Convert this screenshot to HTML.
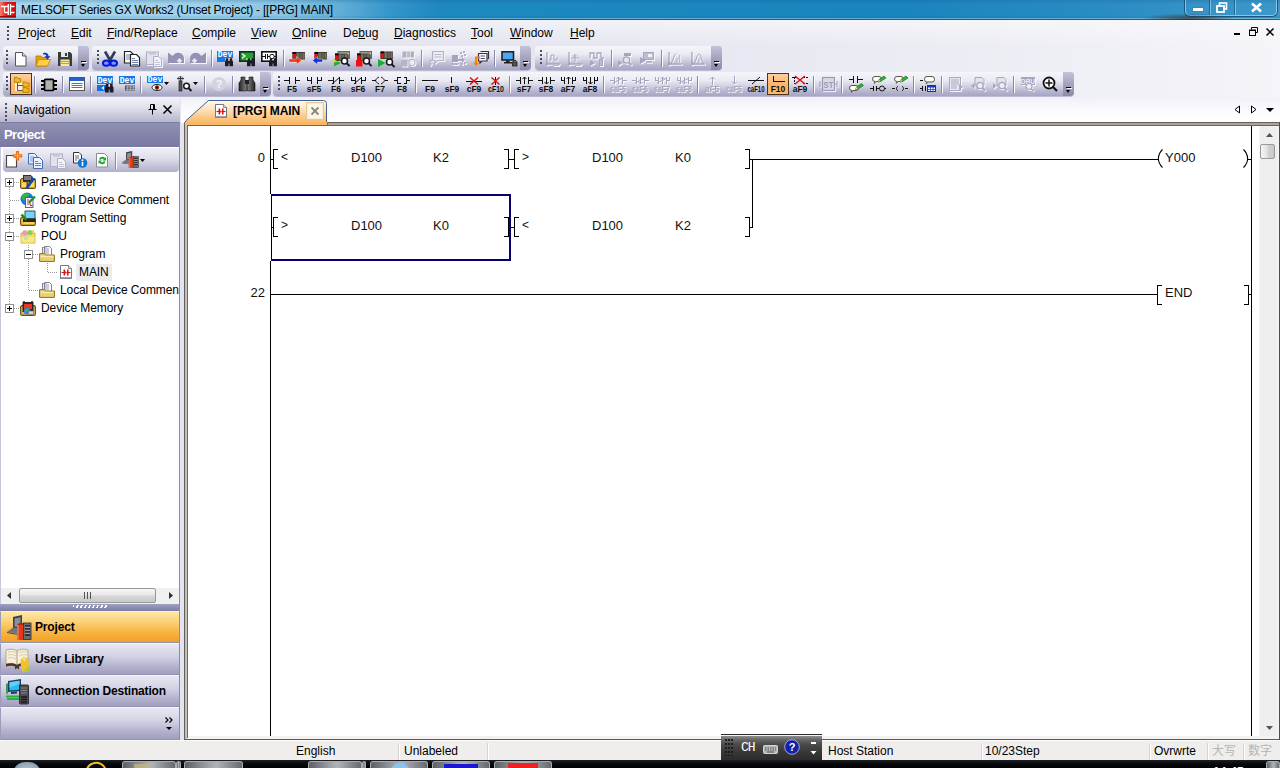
<!DOCTYPE html>
<html>
<head>
<meta charset="utf-8">
<title>MELSOFT Series GX Works2</title>
<style>
*{box-sizing:border-box;margin:0;padding:0}
html,body{width:1280px;height:768px;overflow:hidden}
body{position:relative;background:linear-gradient(90deg,#e2e2ee 0,#e5e5f0 40%,#ececf4 75%,#f4f4f9 100%);font-family:"Liberation Sans","Noto Sans CJK SC",sans-serif;font-size:12px;color:#000}
.a{position:absolute}
svg{position:absolute;overflow:visible}
#title{left:0;top:0;width:1280px;height:20px;background:linear-gradient(180deg,rgba(20,90,140,.25) 0,rgba(255,255,255,0) 4px,rgba(255,255,255,0) 15px,rgba(10,70,120,.25) 20px),linear-gradient(90deg,#a8d6ec 0px,#a0d1e9 200px,#8ac5e3 285px,#62aed7 340px,#3496cb 390px,#1e88c1 440px,#1a84be 900px,#2a8cc4 1100px,#3c98ca 1280px)}
#title .t{left:21px;top:3px;font-size:12px;line-height:15px;white-space:nowrap;color:#000;letter-spacing:-0.24px}
#titleline{left:0;top:18px;width:1280px;height:2px;background:linear-gradient(180deg,rgba(150,215,245,.55) 0,rgba(150,215,245,.55) 1px,#245c80 1px,#245c80 2px)}
#menu{left:0;top:20px;width:1280px;height:26px;background:linear-gradient(180deg,rgba(255,255,255,.45),rgba(255,255,255,0))}
#menu span{position:absolute;top:6px;line-height:15px;font-size:12px;white-space:nowrap}
#menu u{text-decoration:underline;text-underline-offset:1px}
.grip{position:absolute;width:2px;height:14px;background:repeating-linear-gradient(180deg,#4c4c5c 0,#4c4c5c 2px,transparent 2px,transparent 4px)}
.tb{position:absolute;height:24px;box-shadow:0 1px 0 rgba(150,150,185,.55);border-radius:3px 3px 4px 4px;background:linear-gradient(180deg,#f5f5fb 0%,#eaeaf3 35%,#cdcddf 62%,#b4b4ce 82%,#a6a6c4 100%)}
.tbopt{position:absolute;top:0;right:0;width:11px;height:24px;border-radius:0 3px 4px 0;background:linear-gradient(180deg,#c2c2d8 0%,#a4a4c0 50%,#8a8aac 100%)}
.tbopt:before{content:"";position:absolute;left:3px;top:15px;width:5px;height:1px;background:#000;box-shadow:1px 1px 0 #fff}
.tbopt:after{content:"";position:absolute;left:3px;top:18px;border:3px solid transparent;border-top:3px solid #000;border-bottom:none;width:0;height:0;border-left-width:2.5px;border-right-width:2.5px}
.sep{position:absolute;width:2px;height:17px;top:4px;border-left:1px solid #8888a8;border-right:1px solid #fafaff}
.emb{filter:drop-shadow(1px 1px 0 rgba(255,255,255,.85))}
.ic{position:absolute;width:16px;height:16px;top:4px}
.sel{position:absolute;top:1px;width:22px;height:22px;border:1px solid #4a3420;background:linear-gradient(180deg,#fcd0a0,#fbb468 55%,#fbb870)}

#navhdr{left:0;top:97px;width:180px;height:25px;background:linear-gradient(180deg,#f2f2f9 0%,#e2e2ee 40%,#c4c4d8 80%,#b6b6ce 100%)}
#navhdr .t{left:14px;top:6px;font-size:12px;line-height:15px}
#projhdr{left:0px;top:122px;width:180px;height:25px;background:linear-gradient(180deg,#9090b2 0%,#8484aa 50%,#7878a2 100%);border-top:1px solid #7c7ca4}
#projhdr .t{left:4px;top:4px;color:#fff;font-weight:bold;font-size:13px;line-height:16px;letter-spacing:-0.55px}
#navbody{left:0;top:147px;width:180px;height:457px;background:#fff;border-left:1px solid #c8c8d8}
#navtb{left:3px;top:148px;width:176px;height:24px;border-radius:0 0 4px 4px;background:linear-gradient(180deg,#f0f0f8 0%,#e0e0ec 40%,#c4c4d8 75%,#b0b0ca 100%)}
.trow{position:absolute;left:0;height:18px;line-height:18px;font-size:12px;white-space:nowrap;letter-spacing:-0.1px}
.trow span{position:absolute;top:0}
.pm{position:absolute;width:9px;height:9px;border:1px solid #919191;background:#fff}
.pm:before{content:"";position:absolute;left:1px;top:3px;width:5px;height:1px;background:#000}
.pm.plus:after{content:"";position:absolute;left:3px;top:1px;width:1px;height:5px;background:#000}
.dotv{position:absolute;width:1px;background:repeating-linear-gradient(180deg,#999 0,#999 1px,transparent 1px,transparent 2px)}
.doth{position:absolute;height:1px;background:repeating-linear-gradient(90deg,#999 0,#999 1px,transparent 1px,transparent 2px)}
#hscroll{left:1px;top:588px;width:179px;height:16px;background:#f0f0f0}
#hthumb{left:18px;top:0px;width:137px;height:15px;border:1px solid #989898;border-radius:2px;background:linear-gradient(180deg,#f6f6f6 0%,#e8e8e8 45%,#d6d6d6 55%,#cacaca 100%)}
#navsplit{left:0;top:604px;width:180px;height:7px;background:linear-gradient(180deg,#a0a0c0,#7c7ca4)}
.nbtn{position:absolute;left:0;width:180px;height:32px;border-top:1px solid #f4f4fa;border-left:1px solid #9c9cba;background:linear-gradient(180deg,#e8e8f3 0%,#d2d2e4 40%,#b0b0cc 75%,#9e9ebe 100%);box-shadow:inset 0 -1px 0 #9292b2}
.nbtn .t{position:absolute;left:34px;top:7px;font-weight:bold;font-size:12px;line-height:16px;white-space:nowrap;letter-spacing:-0.17px}
.nbtn.on{background:linear-gradient(180deg,#fde8a8 0%,#fbd27a 30%,#f7b442 65%,#f0a022 100%);border-top:1px solid #fff0c8}

#tabstrip{left:181px;top:97px;width:1099px;height:26px;background:linear-gradient(180deg,#f0f0f8 0%,#fbfbfe 50%,#ffffff 100%)}
#split{left:180px;top:97px;width:4px;height:643px;background:#e4e4f1}
#frame{left:184px;top:122px;width:1096px;height:618px;background:#fff}
#doc{left:188px;top:126px;width:1072px;height:611px;background:#fff;overflow:hidden}
.lt{position:absolute;font-family:"Liberation Sans",sans-serif;font-size:13px;line-height:15px;white-space:nowrap;color:#111}
#vscroll{left:1259px;top:126px;width:18px;height:610px;background:#efefef;border-left:1px solid #f6f6f6}
#vthumb{left:0px;top:18px;width:15px;height:15px;border:1px solid #9a9a9a;border-radius:2px;background:linear-gradient(90deg,#f4f4f4 0%,#e4e4e4 45%,#d2d2d2 55%,#c8c8c8 100%)}
#status{left:0;top:740px;width:1280px;height:21px;background:#f0eeec;border-top:1px solid #fafafa}
#status .s{position:absolute;top:3px;font-size:12px;line-height:15px;white-space:nowrap}
#status .d{position:absolute;top:2px;width:1px;height:17px;background:#d4d4d4;box-shadow:1px 0 0 #fff}
#taskbar{left:0;top:760px;width:1280px;height:8px;overflow:hidden;background:linear-gradient(180deg,#1c2024 0,#0a0c10 3px,#000 8px)}
.tkb{position:absolute;top:1px;height:8px;border:1px solid #a8acb0;border-bottom:none;border-radius:3px 3px 0 0;background:linear-gradient(90deg,#5c6066 0,#a4a8ac 45%,#b0b4b8 55%,#666a70 100%)}
</style>
</head>
<body>
<div id="title" class="a"><svg class="a" style="left:0;top:0" width="17" height="19" viewBox="0 0 17 19"><defs><linearGradient id="ti" x1="0" x2="1" y1="0" y2="0"><stop offset="0" stop-color="#f88070"/><stop offset=".35" stop-color="#e82018"/><stop offset="1" stop-color="#d80808"/></linearGradient></defs><rect x="0" y="2" width="16" height="15.5" fill="url(#ti)"/><rect x="0" y="16" width="16" height="1.5" fill="#a00808"/><g stroke="#fff" stroke-width="1.300" fill="none"><path d="M1 6.500h7M10.5 6.500h4M8.300 4v11M10.5 4v11M4.5 6.500v6M4.5 12.500h3.500M10.5 12.500h4"/></g></svg><div class="t a">MELSOFT Series GX Works2 (Unset Project) - [[PRG] MAIN]</div><div class="a" style="left:1185px;top:-4px;width:92px;height:20px;border:1px solid rgba(255,255,255,.45);border-radius:0 0 5px 5px;box-shadow:0 0 0 1px rgba(0,30,60,.5)"></div><div class="a" style="left:1210px;top:0;width:1px;height:15px;background:rgba(255,255,255,.4);box-shadow:-1px 0 0 rgba(0,30,60,.4)"></div><div class="a" style="left:1235px;top:0;width:1px;height:15px;background:rgba(255,255,255,.4);box-shadow:-1px 0 0 rgba(0,30,60,.4)"></div><div class="a" style="left:1193px;top:8px;width:10px;height:3px;background:#fff;box-shadow:0 0 1px #234"></div><svg class="a" style="left:1216px;top:2px" width="12" height="11" viewBox="0 0 12 11"><rect x="3.5" y="1" width="7" height="6" fill="none" stroke="#fff" stroke-width="1.600"/><rect x="1" y="4" width="7" height="6" fill="#3a8ec0" stroke="#fff" stroke-width="1.800"/></svg><svg class="a" style="left:1250px;top:2px" width="13" height="11" viewBox="0 0 13 11"><path d="M2 1.500l9 8M11 1.500l-9 8" stroke="#fff" stroke-width="2.600"/></svg></div>
<div id="titleline" class="a"></div>
<div class="a" style="left:1080px;top:14px;width:200px;height:6px;background:radial-gradient(ellipse 48px 7px at 108px 6px,rgba(50,40,30,.75),rgba(50,40,30,0))"></div><div id="menu" class="a"><div class="grip" style="left:7px;top:6px;height:14px"></div><span style="left:18px"><u>P</u>roject</span><span style="left:71px"><u>E</u>dit</span><span style="left:107px"><u>F</u>ind/Replace</span><span style="left:192px"><u>C</u>ompile</span><span style="left:251px"><u>V</u>iew</span><span style="left:292px"><u>O</u>nline</span><span style="left:343px">De<u>b</u>ug</span><span style="left:394px"><u>D</u>iagnostics</span><span style="left:471px"><u>T</u>ool</span><span style="left:510px"><u>W</u>indow</span><span style="left:570px"><u>H</u>elp</span><div class="a" style="left:1234px;top:13px;width:6px;height:2px;background:#000"></div><svg class="a" style="left:1249px;top:7px" width="9" height="9" viewBox="0 0 9 9"><path d="M2.5 2.500v-2h6v5h-2" fill="none" stroke="#000"/><rect x=".5" y="3" width="6" height="5.5" fill="none" stroke="#000"/><path d="M0 3.500h7" stroke="#000"/></svg><svg class="a" style="left:1266px;top:8px" width="8" height="8" viewBox="0 0 8 8"><path d="M.5 .5l7 7M7.5 .5l-7 7" stroke="#000" stroke-width="1.5"/></svg></div>
<div class="tb" style="left:3px;top:46px;width:86px"><div class="grip" style="left:3px;top:4px"></div><svg class="a" style="left:10px;top:5px" width="16" height="16" viewBox="0 0 16 16" ><path d="M2.5 1.5h7l3.5 3.5v10h-10.5z" fill="#fff" stroke="#555" /><path d="M9.5 1.5v3.5h3.5" fill="#e8e8e8" stroke="#555"/></svg><svg class="a" style="left:32px;top:5px" width="16" height="16" viewBox="0 0 16 16" ><path d="M1 5h5l1 1.5h5v8.5h-11z" fill="#e8a010" stroke="#b87400" stroke-width=".8"/><path d="M1 15l2.5-6.5h12l-3 6.5z" fill="#ffd040" stroke="#c08000" stroke-width=".8"/><path d="M8 2.2c3-1.2 5.5 0 5.6 3h1.9l-3 3.3-3-3.3h1.9c0-1.4-1.4-2-3.4-1.6z" fill="#1038c8"/></svg><svg class="a" style="left:54px;top:5px" width="16" height="16" viewBox="0 0 16 16" ><path d="M1 1h12l2 2v12h-14z" fill="#3a3a3a"/><rect x="4" y="1" width="7" height="5" fill="#e8e8e8"/><rect x="8" y="2" width="2" height="3" fill="#3a3a3a"/><rect x="3.5" y="8.5" width="9" height="6.5" fill="#f8e8a0"/><path d="M3.5 10.5h9M3.5 12.5h9" stroke="#c0a040" /></svg><div class="tbopt"></div></div>
<div class="tb" style="left:92px;top:46px;width:439px"><div class="grip" style="left:5px;top:4px"></div><svg class="a" style="left:10px;top:5px" width="16" height="16" viewBox="0 0 16 16" ><path d="M3 0.500l5.5 9.500M13 0.500l-5.5 9.5" stroke="#2c3c54" stroke-width="2.600" fill="none"/><ellipse cx="4.300" cy="12.200" rx="3.300" ry="2.600" fill="#8098ff" stroke="#0414e4" stroke-width="2"/><ellipse cx="11.700" cy="12.200" rx="3.300" ry="2.600" fill="#8098ff" stroke="#0414e4" stroke-width="2"/></svg><svg class="a" style="left:32px;top:5px" width="16" height="16" viewBox="0 0 16 16" ><path d="M0.5 0.500h6l2.5 2.500v9h-8.500z" fill="#fff" stroke="#222" stroke-width="1.200"/><path d="M2 4h4M2 6h4M2 8h4" stroke="#7080a8"/><path d="M6.5 3.500h6l3 3v8.500h-9z" fill="#fff" stroke="#222" stroke-width="1.200"/><path d="M8 7.500h3M8 9.500h6M8 11.500h6M8 13.500h6" stroke="#7080a8"/></svg><svg class="a emb" style="left:54px;top:5px" width="16" height="16" viewBox="0 0 16 16"><rect x="0.5" y="1" width="12" height="12.5" fill="#e2e2ee" stroke="#aeaec2"/><rect x="3" y="1.5" width="7" height="2" fill="#c4c4d4"/><path d="M7.5 5.500h5l3 3v7h-8z" fill="#f2f2f8" stroke="#aeaec2"/><path d="M9 9.500h3M9 11.500h5M9 13.500h5" stroke="#c4c4d4"/></svg><svg class="a emb" style="left:76px;top:5px" width="16" height="16" viewBox="0 0 16 16"><path d="M0 1.500l4.5 3.5 3-2.800a6 6 0 0 1 8.5 5.500v4.300h-16z" fill="#9292b2"/><path d="M11.5 7l2.800 2.800-2.800 2.800-2.800-2.800z" fill="#e4e4f0"/></svg><svg class="a emb" style="left:98px;top:5px" width="16" height="16" viewBox="0 0 16 16"><g transform="translate(16,0) scale(-1,1)"><path d="M0 1.500l4.5 3.5 3-2.800a6 6 0 0 1 8.5 5.500v4.300h-16z" fill="#9292b2"/><path d="M11.5 7l2.800 2.800-2.800 2.800-2.800-2.800z" fill="#e4e4f0"/></g></svg><div class="sep" style="left:119px"></div><svg class="a" style="left:125px;top:5px" width="16" height="16" viewBox="0 0 16 16" ><rect x="0" y="0" width="16" height="7" fill="#1478e8"/><text x="8" y="6.4" font-family="Liberation Mono,monospace" font-weight="bold" font-size="8.5" fill="#fff" text-anchor="middle" textLength="14.5" lengthAdjust="spacingAndGlyphs">Dev</text><rect x="0" y="7" width="8" height="4" fill="#1478e8"/><g transform="translate(8,7.3) scale(0.8)"><path d="M0 10v-6l1-1.500v-2.500h3v2.500l.5 1.500v6zM10 10v-6l-1-1.500v-2.500h-3v2.500l-.5 1.500v6z" fill="#1c1c24"/><rect x="3.5" y="3.5" width="3" height="3" fill="#1c1c24"/></g></svg><svg class="a" style="left:147px;top:5px" width="16" height="16" viewBox="0 0 16 16" ><rect x=".8" y=".8" width="14.400" height="9.400" fill="#18a828" stroke="#223" stroke-width="1.600"/><path d="M3 2.800l3 2.200-3 2.200M7 8h5" stroke="#fff" fill="none" stroke-width="1.200"/><g transform="translate(8,7.3) scale(0.8)"><path d="M0 10v-6l1-1.500v-2.500h3v2.500l.5 1.500v6zM10 10v-6l-1-1.500v-2.500h-3v2.500l-.5 1.500v6z" fill="#1c1c24"/><rect x="3.5" y="3.5" width="3" height="3" fill="#1c1c24"/></g></svg><svg class="a" style="left:169px;top:5px" width="16" height="16" viewBox="0 0 16 16" ><rect x=".8" y=".8" width="14.400" height="9.400" fill="#fff" stroke="#111" stroke-width="1.600"/><path d="M1 5.500h3M4.5 3v5M6.5 3v5M6.5 5.500h2.500M13 5.500h2" stroke="#111"/><circle cx="11" cy="5.5" r="2.200" fill="none" stroke="#111"/><g transform="translate(8,7.3) scale(0.8)"><path d="M0 10v-6l1-1.500v-2.500h3v2.500l.5 1.500v6zM10 10v-6l-1-1.500v-2.500h-3v2.500l-.5 1.500v6z" fill="#1c1c24"/><rect x="3.5" y="3.5" width="3" height="3" fill="#1c1c24"/></g></svg><div class="sep" style="left:191px"></div><svg class="a" style="left:197px;top:5px" width="16" height="16" viewBox="0 0 16 16" ><rect x="3.5" y="1" width="12.5" height="7.5" fill="#3a3630"/><rect x="3.5" y="1" width="3.5" height="2" fill="#000"/><rect x="3.5" y="3" width="3.5" height="4.5" fill="#e41010"/><rect x="7.5" y="1.8" width="2.5" height="6" fill="#74705e"/><rect x="10.5" y="1.8" width="2.5" height="6" fill="#646052"/><rect x="13.5" y="1.8" width="2.200" height="6" fill="#74705e"/><path d="M0 8h7.500v-2.500l5 4-5 4v-2.500h-7.500z" fill="#ec3410" stroke="#fff" stroke-width=".4"/></svg><svg class="a" style="left:219px;top:5px" width="16" height="16" viewBox="0 0 16 16" ><rect x="3.5" y="1" width="12.5" height="7.5" fill="#3a3630"/><rect x="3.5" y="1" width="3.5" height="2" fill="#000"/><rect x="3.5" y="3" width="3.5" height="4.5" fill="#e41010"/><rect x="7.5" y="1.8" width="2.5" height="6" fill="#74705e"/><rect x="10.5" y="1.8" width="2.5" height="6" fill="#646052"/><rect x="13.5" y="1.8" width="2.200" height="6" fill="#74705e"/><path d="M11.5 8h-5v-2.500l-5 4 5 4v-2.500h5z" fill="#1030e8" stroke="#fff" stroke-width=".4"/></svg><svg class="a" style="left:242px;top:5px" width="16" height="16" viewBox="0 0 16 16" ><rect x="3.5" y="0" width="12.5" height="8" fill="#6a655c"/><rect x="4.5" y="1.5" width="10.5" height="2" fill="#c8c4bc"/><rect x="1" y="2.5" width="12.5" height="7.5" fill="#3a3630"/><rect x="1" y="2.5" width="3.5" height="2" fill="#000"/><rect x="1" y="4.5" width="3.5" height="4.5" fill="#e41010"/><rect x="5" y="3.3" width="2.5" height="6" fill="#74705e"/><rect x="8" y="3.3" width="2.5" height="6" fill="#646052"/><rect x="11" y="3.3" width="2.200" height="6" fill="#74705e"/><path d="M0 8.500l7 3.5-7 3.500z" fill="#20b430"/><path d="M0 8.500l4 2-4 1z" fill="#e8d020"/><path d="M12.6 12.1l3 3" stroke="#181820" stroke-width="2"/><circle cx="10.5" cy="10" r="3" fill="#fff" stroke="#181820" stroke-width="1.5"/></svg><svg class="a" style="left:264px;top:5px" width="16" height="16" viewBox="0 0 16 16" ><rect x="3.5" y="0" width="12.5" height="8" fill="#6a655c"/><rect x="4.5" y="1.5" width="10.5" height="2" fill="#c8c4bc"/><rect x="1" y="2.5" width="12.5" height="7.5" fill="#3a3630"/><rect x="1" y="2.5" width="3.5" height="2" fill="#000"/><rect x="1" y="4.5" width="3.5" height="4.5" fill="#e41010"/><rect x="5" y="3.3" width="2.5" height="6" fill="#74705e"/><rect x="8" y="3.3" width="2.5" height="6" fill="#646052"/><rect x="11" y="3.3" width="2.200" height="6" fill="#74705e"/><rect x="0" y="9" width="6.5" height="6.5" fill="#f01010"/><path d="M12.6 12.1l3 3" stroke="#181820" stroke-width="2"/><circle cx="10.5" cy="10" r="3" fill="#fff" stroke="#181820" stroke-width="1.5"/></svg><svg class="a" style="left:286px;top:5px" width="16" height="16" viewBox="0 0 16 16" ><rect x="2.5" y="0.5" width="12.5" height="7.5" fill="#3a3630"/><rect x="2.5" y="0.5" width="3.5" height="2" fill="#000"/><rect x="2.5" y="2.5" width="3.5" height="4.5" fill="#e41010"/><rect x="6.5" y="1.3" width="2.5" height="6" fill="#74705e"/><rect x="9.5" y="1.3" width="2.5" height="6" fill="#646052"/><rect x="12.5" y="1.3" width="2.200" height="6" fill="#74705e"/><path d="M0 8l7.5 4-7.5 4z" fill="#18b028"/><path d="M13.6 13.1l3 3" stroke="#181820" stroke-width="2"/><circle cx="11.5" cy="11" r="3" fill="#fff" stroke="#181820" stroke-width="1.5"/></svg><svg class="a emb" style="left:308px;top:5px" width="16" height="16" viewBox="0 0 16 16"><rect x="2.5" y="0.5" width="3.5" height="6" fill="#aeaec4"/><rect x="6.5" y="0.5" width="3.5" height="6" fill="#bcbcd0"/><rect x="10.5" y="0.5" width="3.5" height="6" fill="#aeaec4"/><rect x="1" y="9" width="6.5" height="6.5" fill="#b4b4ca"/><circle cx="12" cy="11.5" r="3.200" fill="#ececf4" stroke="#b0b0c6"/></svg><div class="sep" style="left:329px"></div><svg class="a emb" style="left:337px;top:5px" width="16" height="16" viewBox="0 0 16 16"><path d="M3.5 0.500h11v9h-6l-2.5 2.500v-2.500h-2.500z" fill="#ececf4" stroke="#b0b0c6" stroke-width="1.200"/><path d="M5.5 3.500h7M5.5 6h7" stroke="#b8b8cc" stroke-width="1.200"/><path d="M1.5 15v-5.500h3" fill="none" stroke="#b8b8cc" stroke-width="1.5"/><path d="M0 12l1.5 3.5 1.5-3.500z" fill="#b8b8cc"/></svg><svg class="a emb" style="left:359px;top:5px" width="16" height="16" viewBox="0 0 16 16"><rect x="1" y="4" width="6" height="7" fill="#a4a4be"/><path d="M0 12h8l-1 2h-6z" fill="#b0b0c8"/><path d="M7 8h4v-2l3 3-3 3v-2h-4z" fill="#a8a8c0"/><path d="M9 1h2v2h-2zM12 0h2v2h-2zM13 3h2v2h-2zM10 4h2v2h-2zM13 11h2v2h-2zM10 12h2v2h-2z" fill="#b0b0c8"/></svg><svg class="a" style="left:381px;top:5px" width="16" height="16" viewBox="0 0 16 16" ><path d="M7.5 0.500h8v7h-1" fill="#f4f4fa" stroke="#334" stroke-width="1.200"/><path d="M5.5 2.500h8.500v7.500h-5l-2 2v-2h-1.500z" fill="#fafaff" stroke="#334" stroke-width="1.200"/><path d="M7.5 5h4.500M7.5 7.500h4.5" stroke="#556"/><path d="M7 6.500h-4v6" fill="none" stroke="#f88400" stroke-width="2"/><path d="M0 11.500h6l-3 4z" fill="#f88400"/></svg><div class="sep" style="left:402px"></div><svg class="a" style="left:409px;top:5px" width="16" height="16" viewBox="0 0 16 16" ><rect x="1" y="0.800" width="11.5" height="8.200" fill="#48a8f8" stroke="#222" stroke-width="1.600"/><rect x="5" y="9.5" width="3.5" height="1.5" fill="#222"/><rect x="3" y="11" width="8" height="1.5" fill="#222"/><rect x="11.5" y="11" width="4.5" height="4" fill="#555" stroke="#222" stroke-width=".8"/><path d="M12.5 11v-1.500h2.500v1.5" fill="none" stroke="#333"/></svg><div class="tbopt"></div></div>
<div class="tb" style="left:535px;top:46px;width:187px"><div class="grip" style="left:5px;top:4px"></div><svg class="a emb" style="left:10px;top:5px" width="16" height="16" viewBox="0 0 16 16"><path d="M2 1v12h13" stroke="#a6a6c0" fill="none" stroke-width="1.300"/><path d="M4 9h2v-5h3v5h3v-3" stroke="#a6a6c0" fill="none"/><path d="M1 10l4 2.5-4 2.500z" fill="#a6a6c0"/><path d="M8 14h6" stroke="#bcbcd0" stroke-width="2"/></svg><svg class="a emb" style="left:32px;top:5px" width="16" height="16" viewBox="0 0 16 16"><path d="M2 1v12h13" stroke="#a6a6c0" fill="none" stroke-width="1.300"/><path d="M4 7h8M8 3v8M6 5h4" stroke="#a6a6c0" fill="none"/><path d="M1 10l4 2.5-4 2.500z" fill="#a6a6c0"/><path d="M8 14h6" stroke="#bcbcd0" stroke-width="2"/></svg><svg class="a emb" style="left:54px;top:5px" width="16" height="16" viewBox="0 0 16 16"><path d="M1 7v-5h4v5h3v-5h4v5h3" stroke="#a6a6c0" fill="none" stroke-width="1.300"/><path d="M1 9l5 3-5 3z" fill="#a6a6c0"/><rect x="10.5" y="8.5" width="3" height="6" fill="#bcbcd0" stroke="#a6a6c0"/></svg><div class="sep" style="left:76px"></div><svg class="a emb" style="left:82px;top:5px" width="16" height="16" viewBox="0 0 16 16"><path d="M7 2h7v3h-7z" fill="#a6a6c0"/><circle cx="9.5" cy="9" r="3.200" fill="#e4e4ee" stroke="#a6a6c0" stroke-width="1.300"/><path d="M12 11.500l2.5 2.5" stroke="#a6a6c0" stroke-width="1.800"/><path d="M1 9l4.5 3-4.5 3z" fill="#a6a6c0"/></svg><svg class="a emb" style="left:104px;top:5px" width="16" height="16" viewBox="0 0 16 16"><rect x="4.5" y="1.5" width="10" height="7" fill="#bcbcd0" stroke="#a6a6c0"/><rect x="9" y="3" width="4" height="3" fill="#f0f0f6"/><path d="M1 6l6 3.5-6 3.500z" fill="#a6a6c0"/><path d="M7 11h6" stroke="#a6a6c0" stroke-width="1.5"/></svg><div class="sep" style="left:126px"></div><svg class="a emb" style="left:132px;top:5px" width="16" height="16" viewBox="0 0 16 16"><path d="M2 1v12h13" stroke="#a6a6c0" fill="none" stroke-width="1.300"/><path d="M4 12c2-1 3-9 5-9" stroke="#a6a6c0" fill="none"/><path d="M10 12v-5M12.5 12v-8" stroke="#bcbcd0" stroke-width="1.5"/><path d="M1 10l4 2.5-4 2.500z" fill="#a6a6c0"/></svg><svg class="a emb" style="left:155px;top:5px" width="16" height="16" viewBox="0 0 16 16"><path d="M2 1v12h13" stroke="#a6a6c0" fill="none" stroke-width="1.300"/><path d="M4 12c2-1 3-9 5-9s2 6 5 9" stroke="#a6a6c0" fill="none"/><path d="M9 13v-5" stroke="#bcbcd0" stroke-width="1.5"/><path d="M1 10l4 2.5-4 2.500z" fill="#a6a6c0"/></svg><div class="tbopt"></div></div>
<div class="tb" style="left:3px;top:72px;width:268px"><div class="grip" style="left:3px;top:4px"></div><div class="sel" style="left:7px"></div><svg class="a" style="left:10px;top:4px" width="16" height="16" viewBox="0 0 16 16" ><rect x="2" y="6" width="9" height="9" fill="#fff" opacity=".75"/><path d="M4.5 6v8.500h6M4.5 9.500h6" stroke="#555" fill="none"/><g transform="translate(1,1)"><path d="M.4 .4h2.800l.8 1.200h2.600v3.800h-6.200z" fill="#f4b818" stroke="#a87800" stroke-width=".8"/></g><g transform="translate(9.5,5.5)"><path d="M.4 .4h2.800l.8 1.200h2.600v3.800h-6.200z" fill="#f4b818" stroke="#a87800" stroke-width=".8"/></g><g transform="translate(9.5,11)"><path d="M.4 .4h2.800l.8 1.200h2.600v3.800h-6.200z" fill="#f4b818" stroke="#a87800" stroke-width=".8"/></g></svg><div class="sep" style="left:31px"></div><svg class="a" style="left:38px;top:4px" width="16" height="16" viewBox="0 0 16 16" ><path d="M0 5h3.500M0 9h3.500M0 13h3.500M12.5 5h3.500M12.5 9h3.500M12.5 13h3.5" stroke="#000" stroke-width="1.800"/><rect x="3.5" y="3.300" width="9" height="11.200" rx="1" fill="#b0b0b0" stroke="#000" stroke-width="1.700"/></svg><div class="sep" style="left:59px"></div><svg class="a" style="left:66px;top:4px" width="16" height="16" viewBox="0 0 16 16" ><rect x=".5" y="1.5" width="15" height="13" fill="#fff" stroke="#555"/><rect x="1" y="2" width="14" height="3" fill="#2060d0"/><path d="M2.5 7.500h11M2.5 9.500h11M2.5 11.500h11" stroke="#4070d0"/></svg><div class="sep" style="left:87px"></div><svg class="a" style="left:94px;top:4px" width="16" height="16" viewBox="0 0 16 16" ><rect x="0" y="0" width="16" height="8" fill="#1478e8"/><text x="8" y="7.4" font-family="Liberation Mono,monospace" font-weight="bold" font-size="8.5" fill="#fff" text-anchor="middle" textLength="14.5" lengthAdjust="spacingAndGlyphs">Dev</text><rect x="0" y="9" width="9" height="6" fill="#1070e0"/><path d="M7 10l-2.5 2 2.5 2z" fill="#fff"/><g transform="translate(8,8) scale(0.85)"><path d="M0 10v-6l1-1.500v-2.500h3v2.500l.5 1.500v6zM10 10v-6l-1-1.500v-2.500h-3v2.500l-.5 1.500v6z" fill="#1c1c24"/><rect x="3.5" y="3.5" width="3" height="3" fill="#1c1c24"/></g></svg><svg class="a" style="left:116px;top:4px" width="16" height="16" viewBox="0 0 16 16" ><rect x="0" y="0" width="16" height="8" fill="#1478e8"/><text x="8" y="7.4" font-family="Liberation Mono,monospace" font-weight="bold" font-size="8.5" fill="#fff" text-anchor="middle" textLength="14.5" lengthAdjust="spacingAndGlyphs">Dev</text><rect x="6" y="9.5" width="10" height="5" fill="#556"/><path d="M7.5 11h2M10.5 11h2M13.5 11h2M7.5 13.200h2M10.5 13.200h2M13.5 13.200h2" stroke="#fff" /></svg><div class="sep" style="left:137px"></div><svg class="a" style="left:144px;top:4px" width="16" height="16" viewBox="0 0 16 16" ><rect x="0" y="0" width="16" height="7" fill="#1478e8"/><text x="8" y="6.4" font-family="Liberation Mono,monospace" font-weight="bold" font-size="8.5" fill="#fff" text-anchor="middle" textLength="14.5" lengthAdjust="spacingAndGlyphs">Dev</text><ellipse cx="10" cy="11.5" rx="5" ry="3" fill="#fff" stroke="#222"/><circle cx="10" cy="11.5" r="2.200" fill="#902808"/><circle cx="10" cy="11.5" r="1" fill="#000"/></svg><svg class="a" style="left:161px;top:10px" width="5" height="3" viewBox="0 0 5 3"><path d="M0 0h5l-2.5 3z" fill="#000"/></svg><svg class="a" style="left:173px;top:4px" width="16" height="16" viewBox="0 0 16 16" ><path d="M4.5 0v5M1 2.500h7" stroke="#333"/><ellipse cx="4.5" cy="2.5" rx="2.800" ry="1.800" fill="none" stroke="#555" stroke-width=".7"/><rect x="3" y="5" width="3" height="10" fill="#555" stroke="#222" stroke-width=".7"/><path d="M12.46 11.96l3 3" stroke="#181820" stroke-width="2"/><circle cx="10.5" cy="10" r="2.8" fill="#fff" stroke="#181820" stroke-width="1.5"/></svg><svg class="a" style="left:190px;top:10px" width="5" height="3" viewBox="0 0 5 3"><path d="M0 0h5l-2.5 3z" fill="#000"/></svg><div class="sep" style="left:201px"></div><svg class="a" style="left:208px;top:4px" width="16" height="16" viewBox="0 0 16 16" ><circle cx="8" cy="8" r="7" fill="#d2d2e0"/><text x="8" y="12" text-anchor="middle" font-family="Liberation Sans,sans-serif" font-weight="bold" font-size="11" fill="#f4f4fa">?</text></svg><div class="sep" style="left:229px"></div><svg class="a" style="left:236px;top:4px" width="16" height="16" viewBox="0 0 16 16" ><defs><linearGradient id="bg1" x1="0" x2="1"><stop offset="0" stop-color="#222"/><stop offset=".5" stop-color="#888"/><stop offset="1" stop-color="#222"/></linearGradient></defs><path d="M0 15v-8l2-3v-3h4v3l1.5 3v8zM16 15v-8l-2-3v-3h-4v3l-1.5 3v8z" fill="url(#bg1)" stroke="#111" stroke-width=".6"/><rect x="6" y="4" width="4" height="4" fill="#222"/></svg><div class="tbopt"></div></div>
<div class="tb" style="left:273px;top:72px;width:801px"><div class="grip" style="left:5px;top:4px"></div><div class="sel" style="left:494px"></div><svg class="a" style="left:11px;top:4px" width="16" height="17" viewBox="0 0 16 17" ><g stroke="#111" fill="none" shape-rendering="crispEdges"><path d="M0 4.500h5.500M5.5 1v7M11.5 1v7M11.5 4.500h4.5"/></g><text x="8" y="15.600" text-anchor="middle" font-family="Liberation Sans,sans-serif" font-weight="bold" font-size="8.5" fill="#111" >F5</text></svg><svg class="a" style="left:33px;top:4px" width="16" height="17" viewBox="0 0 16 17" ><g stroke="#111" fill="none" shape-rendering="crispEdges"><path d="M1.5 1v3.500h4M5.5 1v7M11.5 1v7M11.5 4.500h4M15.5 4.500v-3.5"/></g><text x="8" y="15.600" text-anchor="middle" font-family="Liberation Sans,sans-serif" font-weight="bold" font-size="8.5" fill="#111" >sF5</text></svg><svg class="a" style="left:55px;top:4px" width="16" height="17" viewBox="0 0 16 17" ><g stroke="#111" fill="none" shape-rendering="crispEdges"><path d="M0 4.500h5.500M5.5 1v7M11.5 1v7M11.5 4.500h4.5"/><path d="M4 8l8-7" shape-rendering="auto"/></g><text x="8" y="15.600" text-anchor="middle" font-family="Liberation Sans,sans-serif" font-weight="bold" font-size="8.5" fill="#111" >F6</text></svg><svg class="a" style="left:77px;top:4px" width="16" height="17" viewBox="0 0 16 17" ><g stroke="#111" fill="none" shape-rendering="crispEdges"><path d="M1.5 1v3.500h4M5.5 1v7M11.5 1v7M11.5 4.500h4M15.5 4.500v-3.5"/><path d="M4 8l8-7" shape-rendering="auto"/></g><text x="8" y="15.600" text-anchor="middle" font-family="Liberation Sans,sans-serif" font-weight="bold" font-size="8.5" fill="#111" >sF6</text></svg><svg class="a" style="left:99px;top:4px" width="16" height="17" viewBox="0 0 16 17" ><g stroke="#111" fill="none" shape-rendering="crispEdges"><path d="M0 4.500h3.500M12.5 4.500h3.5"/><path d="M7 1c-4.5 2.5-4.5 4.5 0 7M9 1c4.5 2.5 4.5 4.5 0 7" shape-rendering="auto"/></g><text x="8" y="15.600" text-anchor="middle" font-family="Liberation Sans,sans-serif" font-weight="bold" font-size="8.5" fill="#111" >F7</text></svg><svg class="a" style="left:121px;top:4px" width="16" height="17" viewBox="0 0 16 17" ><g stroke="#111" fill="none" shape-rendering="crispEdges"><path d="M0 4.500h3.500M12.5 4.500h3.500M6.5 1.500h-3v6h3M9.5 1.500h3v6h-3"/></g><text x="8" y="15.600" text-anchor="middle" font-family="Liberation Sans,sans-serif" font-weight="bold" font-size="8.5" fill="#111" >F8</text></svg><svg class="a" style="left:149px;top:4px" width="16" height="17" viewBox="0 0 16 17" ><g stroke="#111" fill="none" shape-rendering="crispEdges"><path d="M0 4.500h16"/></g><text x="8" y="15.600" text-anchor="middle" font-family="Liberation Sans,sans-serif" font-weight="bold" font-size="8.5" fill="#111" >F9</text></svg><svg class="a" style="left:171px;top:4px" width="16" height="17" viewBox="0 0 16 17" ><g stroke="#111" fill="none" shape-rendering="crispEdges"><path d="M7.5 1v6"/></g><text x="8" y="15.600" text-anchor="middle" font-family="Liberation Sans,sans-serif" font-weight="bold" font-size="8.5" fill="#111" >sF9</text></svg><svg class="a" style="left:193px;top:4px" width="16" height="17" viewBox="0 0 16 17" ><g stroke="#111" fill="none" shape-rendering="crispEdges"><path d="M0 5.500h16"/><path d="M4 1.500l8 7M12 1.500l-8 7" stroke="#e01010" stroke-width="1.5" shape-rendering="auto"/></g><text x="8" y="15.600" text-anchor="middle" font-family="Liberation Sans,sans-serif" font-weight="bold" font-size="8.5" fill="#111" >cF9</text></svg><svg class="a" style="left:215px;top:4px" width="16" height="17" viewBox="0 0 16 17" ><g stroke="#111" fill="none" shape-rendering="crispEdges"><path d="M7.5 1v8"/><path d="M3.5 1.500l8 7M11.5 1.500l-8 7" stroke="#e01010" stroke-width="1.5" shape-rendering="auto"/></g><text x="8" y="15.600" text-anchor="middle" font-family="Liberation Sans,sans-serif" font-weight="bold" font-size="8.5" fill="#111" textLength="16" lengthAdjust="spacingAndGlyphs">cF10</text></svg><svg class="a" style="left:243px;top:4px" width="16" height="17" viewBox="0 0 16 17" ><g stroke="#111" fill="none" shape-rendering="crispEdges"><path d="M0 4.500h4.500M4.5 1v7M12.5 1v7M12.5 4.500h4"/><path d="M8.5 8v-7M6.5 3l2-2 2 2" shape-rendering="auto"/></g><text x="8" y="15.600" text-anchor="middle" font-family="Liberation Sans,sans-serif" font-weight="bold" font-size="8.5" fill="#111" >sF7</text></svg><svg class="a" style="left:265px;top:4px" width="16" height="17" viewBox="0 0 16 17" ><g stroke="#111" fill="none" shape-rendering="crispEdges"><path d="M0 4.500h4.500M4.5 1v7M12.5 1v7M12.5 4.500h4"/><path d="M8.5 1v7M6.5 6l2 2 2-2" shape-rendering="auto"/></g><text x="8" y="15.600" text-anchor="middle" font-family="Liberation Sans,sans-serif" font-weight="bold" font-size="8.5" fill="#111" >sF8</text></svg><svg class="a" style="left:287px;top:4px" width="16" height="17" viewBox="0 0 16 17" ><g stroke="#111" fill="none" shape-rendering="crispEdges"><path d="M1.5 1v3.500h3M4.5 1v7M12.5 1v7M12.5 4.500h3M15.5 4.500v-3.5"/><path d="M8.5 8v-7M6.5 3l2-2 2 2" shape-rendering="auto"/></g><text x="8" y="15.600" text-anchor="middle" font-family="Liberation Sans,sans-serif" font-weight="bold" font-size="8.5" fill="#111" >aF7</text></svg><svg class="a" style="left:309px;top:4px" width="16" height="17" viewBox="0 0 16 17" ><g stroke="#111" fill="none" shape-rendering="crispEdges"><path d="M1.5 1v3.500h3M4.5 1v7M12.5 1v7M12.5 4.500h3M15.5 4.500v-3.5"/><path d="M8.5 1v7M6.5 6l2 2 2-2" shape-rendering="auto"/></g><text x="8" y="15.600" text-anchor="middle" font-family="Liberation Sans,sans-serif" font-weight="bold" font-size="8.5" fill="#111" >aF8</text></svg><svg class="a emb" style="left:337px;top:4px" width="16" height="17" viewBox="0 0 16 17"><g stroke="#a4a4bc" fill="none" shape-rendering="crispEdges"><path d="M0 4.500h4.500M4.5 1v7M12.5 1v7M12.5 4.500h4"/><path d="M8.5 8v-7M6.5 3l2-2 2 2" shape-rendering="auto"/><path d="M3 7l10-5" shape-rendering="auto"/></g><text x="8" y="15.600" text-anchor="middle" font-family="Liberation Sans,sans-serif" font-weight="bold" font-size="8.5" fill="#a4a4bc" textLength="16" lengthAdjust="spacingAndGlyphs">saF5</text></svg><svg class="a emb" style="left:359px;top:4px" width="16" height="17" viewBox="0 0 16 17"><g stroke="#a4a4bc" fill="none" shape-rendering="crispEdges"><path d="M0 4.500h4.500M4.5 1v7M12.5 1v7M12.5 4.500h4"/><path d="M8.5 1v7M6.5 6l2 2 2-2" shape-rendering="auto"/><path d="M3 7l10-5" shape-rendering="auto"/></g><text x="8" y="15.600" text-anchor="middle" font-family="Liberation Sans,sans-serif" font-weight="bold" font-size="8.5" fill="#a4a4bc" textLength="16" lengthAdjust="spacingAndGlyphs">saF6</text></svg><svg class="a emb" style="left:381px;top:4px" width="16" height="17" viewBox="0 0 16 17"><g stroke="#a4a4bc" fill="none" shape-rendering="crispEdges"><path d="M1.5 1v3.500h3M4.5 1v7M12.5 1v7M12.5 4.500h3M15.5 4.500v-3.5"/><path d="M8.5 8v-7M6.5 3l2-2 2 2" shape-rendering="auto"/><path d="M3 7l10-5" shape-rendering="auto"/></g><text x="8" y="15.600" text-anchor="middle" font-family="Liberation Sans,sans-serif" font-weight="bold" font-size="8.5" fill="#a4a4bc" textLength="16" lengthAdjust="spacingAndGlyphs">saF7</text></svg><svg class="a emb" style="left:403px;top:4px" width="16" height="17" viewBox="0 0 16 17"><g stroke="#a4a4bc" fill="none" shape-rendering="crispEdges"><path d="M1.5 1v3.500h3M4.5 1v7M12.5 1v7M12.5 4.500h3M15.5 4.500v-3.5"/><path d="M8.5 1v7M6.5 6l2 2 2-2" shape-rendering="auto"/><path d="M3 7l10-5" shape-rendering="auto"/></g><text x="8" y="15.600" text-anchor="middle" font-family="Liberation Sans,sans-serif" font-weight="bold" font-size="8.5" fill="#a4a4bc" textLength="16" lengthAdjust="spacingAndGlyphs">saF8</text></svg><svg class="a emb" style="left:431px;top:4px" width="16" height="17" viewBox="0 0 16 17"><g stroke="#a4a4bc" fill="none" shape-rendering="crispEdges"><path d="M8.5 9v-8M6 3.500l2.5-2.5 2.5 2.5" shape-rendering="auto"/></g><text x="8" y="15.600" text-anchor="middle" font-family="Liberation Sans,sans-serif" font-weight="bold" font-size="8.5" fill="#a4a4bc" >aF5</text></svg><svg class="a emb" style="left:453px;top:4px" width="16" height="17" viewBox="0 0 16 17"><g stroke="#a4a4bc" fill="none" shape-rendering="crispEdges"><path d="M8.5 0v8M6 5.500l2.5 2.5 2.5-2.5" shape-rendering="auto"/></g><text x="8" y="15.600" text-anchor="middle" font-family="Liberation Sans,sans-serif" font-weight="bold" font-size="8.5" fill="#a4a4bc" textLength="16" lengthAdjust="spacingAndGlyphs">caF5</text></svg><svg class="a" style="left:475px;top:4px" width="16" height="17" viewBox="0 0 16 17" ><g stroke="#111" fill="none" shape-rendering="crispEdges"><path d="M0 4.500h16"/><path d="M4 8l8-7" shape-rendering="auto"/></g><text x="8" y="15.600" text-anchor="middle" font-family="Liberation Sans,sans-serif" font-weight="bold" font-size="8.5" fill="#111" textLength="17" lengthAdjust="spacingAndGlyphs">caF10</text></svg><svg class="a" style="left:497px;top:4px" width="16" height="17" viewBox="0 0 16 17" ><g stroke="#111" fill="none" shape-rendering="crispEdges"><path d="M3.5 0v5.500h11" stroke-width="1"/></g><text x="8" y="15.600" text-anchor="middle" font-family="Liberation Sans,sans-serif" font-weight="bold" font-size="8.5" fill="#111" >F10</text></svg><svg class="a" style="left:519px;top:4px" width="16" height="17" viewBox="0 0 16 17" ><g stroke="#111" fill="none" shape-rendering="crispEdges"><path d="M2.5 1v7M0 1.500h5M11 1.500h5M11 7.500h5" stroke-dasharray="2 1"/><path d="M3 0l10 8M13 0l-10 8" stroke="#e01010" stroke-width="1.5" shape-rendering="auto"/></g><text x="8" y="15.600" text-anchor="middle" font-family="Liberation Sans,sans-serif" font-weight="bold" font-size="8.5" fill="#111" >aF9</text></svg><div class="sep" style="left:142px"></div><div class="sep" style="left:236px"></div><div class="sep" style="left:330px"></div><div class="sep" style="left:424px"></div><div class="sep" style="left:540px"></div><div class="sep" style="left:568px"></div><div class="sep" style="left:640px"></div><div class="sep" style="left:668px"></div><div class="sep" style="left:740px"></div><svg class="a emb" style="left:547px;top:4px" width="16" height="16" viewBox="0 0 16 16"><g stroke="#9a9ab4" fill="none"><rect x="2.5" y="1.5" width="12" height="13" fill="#d8d8e6" stroke-width="1.200"/><path d="M0 5v6M1.5 8h1M15 8h1.500M17 5v6"/></g><text x="8.5" y="11.5" text-anchor="middle" font-family="Liberation Sans,sans-serif" font-weight="bold" font-size="9" fill="#9a9ab4" textLength="10" lengthAdjust="spacingAndGlyphs">ST</text></svg><svg class="a" style="left:575px;top:4px" width="16" height="16" viewBox="0 0 16 16" ><g stroke="#111" fill="none" shape-rendering="crispEdges"><path d="M1 3.500h4.500M5.5 0v7M9.5 0v7M9.5 3.500h5"/></g><rect x="1.5" y="9.5" width="9" height="5" rx="2.5" fill="#fffff0" stroke="#444" stroke-width=".9"/><path d="M4 14.5l-1 2 2.5-2" fill="#fffff0" stroke="#444" stroke-width=".7"/><g transform="translate(7.5,7.5)"><path d="M0 6l1-2.5 5-3.5 2 2-5.5 3.500z" fill="#30b030" stroke="#106010" stroke-width=".6"/><path d="M0 6l1-2.5 1.5 1.500z" fill="#f0d080"/></g></svg><svg class="a" style="left:597px;top:4px" width="16" height="16" viewBox="0 0 16 16" ><rect x="2.5" y="0.5" width="9" height="5" rx="2.5" fill="#fffff0" stroke="#444" stroke-width=".9"/><path d="M5 5.5l-1 2 2.5-2" fill="#fffff0" stroke="#444" stroke-width=".7"/><g transform="translate(8,0)"><path d="M0 6l1-2.5 5-3.5 2 2-5.5 3.500z" fill="#30b030" stroke="#106010" stroke-width=".6"/><path d="M0 6l1-2.5 1.5 1.500z" fill="#f0d080"/></g><g stroke="#111" fill="none" shape-rendering="crispEdges"><path d="M0 12.500h3.500M3.5 10v5M6.5 10v5M6.5 12.500h2.5"/></g><circle cx="12" cy="12.5" r="2.5" fill="none" stroke="#111"/><path d="M14.5 12.500h1.5" stroke="#111"/></svg><svg class="a" style="left:619px;top:4px" width="16" height="16" viewBox="0 0 16 16" ><rect x="2.5" y="0.5" width="9" height="5" rx="2.5" fill="#fffff0" stroke="#444" stroke-width=".9"/><path d="M5 5.5l-1 2 2.5-2" fill="#fffff0" stroke="#444" stroke-width=".7"/><g transform="translate(8,0)"><path d="M0 6l1-2.5 5-3.5 2 2-5.5 3.500z" fill="#30b030" stroke="#106010" stroke-width=".6"/><path d="M0 6l1-2.5 1.5 1.500z" fill="#f0d080"/></g><path d="M0 12.500h3M13 12.500h3" stroke="#111"/><path d="M6 10c-2 1.5-2 3.5 0 5M10 10c2 1.5 2 3.5 0 5" fill="none" stroke="#111"/></svg><svg class="a" style="left:647px;top:4px" width="16" height="16" viewBox="0 0 16 16" ><rect x="4.5" y="0.5" width="10" height="5.5" rx="2.5" fill="#fffff0" stroke="#444" stroke-width=".9"/><path d="M7 6l-1 2 2.5-2" fill="#fffff0" stroke="#444" stroke-width=".7"/><g stroke="#111" fill="none" shape-rendering="crispEdges"><path d="M0 4.500h3M0 12.500h2.500M2.5 10v5M5.5 10v5"/></g><rect x="7.5" y="9.5" width="8" height="6" fill="#fff" stroke="#1030c0"/><rect x="7.5" y="9.5" width="8" height="2" fill="#1030c0"/><path d="M7.5 13.500h8M10.5 11v4.500M13 11v4.5" stroke="#1030c0" stroke-width=".7"/></svg><svg class="a emb" style="left:675px;top:4px" width="16" height="16" viewBox="0 0 16 16"><rect x="1.5" y="1.5" width="11" height="13" fill="#e8e8f0" stroke="#a8a8c0"/><path d="M3 4h8M3 6h8M3 8h8M3 10h6M3 12h6" stroke="#a8a8c0"/><path d="M11 8l4 3-4 3z" fill="#a8a8c0"/></svg><svg class="a emb" style="left:697px;top:4px" width="16" height="16" viewBox="0 0 16 16"><path d="M5 1.500h7l2 2v6h-9z" fill="#e4e4ee" stroke="#a6a6c0"/><path d="M1 10l3.5-3v6z" fill="#a6a6c0"/><circle cx="10" cy="9.5" r="3.200" fill="#eeeef4" stroke="#a6a6c0" stroke-width="1.300"/><path d="M12.5 12l2.5 2.5" stroke="#a6a6c0" stroke-width="1.800"/></svg><svg class="a emb" style="left:719px;top:4px" width="16" height="16" viewBox="0 0 16 16"><path d="M5 1.500h7l2 2v6h-9z" fill="#e4e4ee" stroke="#a6a6c0"/><path d="M1 7l3.5 3-3.5 3z" fill="#a6a6c0"/><circle cx="10" cy="9.5" r="3.200" fill="#eeeef4" stroke="#a6a6c0" stroke-width="1.300"/><path d="M12.5 12l2.5 2.5" stroke="#a6a6c0" stroke-width="1.800"/></svg><svg class="a emb" style="left:747px;top:4px" width="16" height="16" viewBox="0 0 16 16"><rect x="1" y="1" width="14" height="8" fill="#a6a6c0"/><text x="8" y="7.5" text-anchor="middle" font-family="Liberation Sans,sans-serif" font-weight="bold" font-size="6.5" fill="#eeeef6">DBU</text><circle cx="9" cy="10.5" r="3" fill="#eeeef4" stroke="#a6a6c0" stroke-width="1.200"/><path d="M11.5 13l2 2" stroke="#a6a6c0" stroke-width="1.600"/></svg><svg class="a" style="left:769px;top:4px" width="16" height="16" viewBox="0 0 16 16" ><circle cx="7" cy="7" r="5.5" fill="#fff" stroke="#111" stroke-width="1.800"/><path d="M3.5 7h7M7 3.500v7" stroke="#111" stroke-width="1.5"/><path d="M11 11l4 4" stroke="#111" stroke-width="2.200"/></svg><div class="tbopt"></div></div>
<div id="navhdr" class="a"><div class="grip" style="left:5px;top:6px;height:18px"></div><div class="t a">Navigation</div><svg class="a" style="left:148px;top:7px" width="9" height="11" viewBox="0 0 9 11"><path d="M2.5 0.500h4v5h-4zM5.5 0.500v5M0.5 5.500h8M4.5 5.500v5" stroke="#000" fill="none"/></svg><svg class="a" style="left:163px;top:8px" width="9" height="9" viewBox="0 0 9 9"><path d="M0.5 0.500l8 8M8.5 0.500l-8 8" stroke="#000" stroke-width="1.600"/></svg></div>
<div id="projhdr" class="a"><div class="t a">Project</div></div>
<div id="navbody" class="a"></div>
<div id="navtb" class="a"><svg class="a" style="left:3px;top:3px" width="16" height="16" viewBox="0 0 16 16" ><path d="M0.5 4.500h7.500l2.5 2.500v9h-10z" fill="#fff" stroke="#444" stroke-width="1.100"/><path d="M11.5 0v9.500M6.800 4.800h9.5" stroke="#ee7410" stroke-width="3.200"/><path d="M11.5 1.500v6.500M8.300 4.800h6.5" stroke="#fbb060" stroke-width="1"/></svg><svg class="a" style="left:25px;top:5px" width="16" height="16" viewBox="0 0 16 16" ><path d="M0.5 0.500h6l2.5 2.500v8h-8.500z" fill="#e4eeff" stroke="#3c6cb8"/><path d="M2 4h4M2 6h4M2 8h4" stroke="#7898d0"/><path d="M5.5 4.500h6l3 3v8h-9z" fill="#eef4ff" stroke="#3c6cb8"/><path d="M7 8.500h3M7 10.500h6M7 12.500h6" stroke="#5c84c8"/></svg><svg class="a" style="left:47px;top:5px" width="16" height="16" viewBox="0 0 16 16" ><rect x="0.5" y="1" width="12" height="12.5" fill="#e2e2ee" stroke="#aeaec2"/><rect x="3" y="1.5" width="7" height="2" fill="#c4c4d4"/><path d="M7.5 5.500h5l3 3v7h-8z" fill="#f2f2f8" stroke="#aeaec2"/><path d="M9 9.500h3M9 11.500h5M9 13.500h5" stroke="#c4c4d4"/></svg><svg class="a" style="left:69px;top:4px" width="16" height="16" viewBox="0 0 16 16" ><path d="M1.5 0.500h5.500l2.5 2.500v8h-8z" fill="#fff" stroke="#333"/><path d="M3 4h4M3 6h4M3 8h2" stroke="#666"/><circle cx="10.5" cy="11" r="4.800" fill="#1474d4"/><path d="M10.5 10v4" stroke="#fff" stroke-width="1.600"/><circle cx="10.5" cy="8.300" r="1" fill="#fff"/></svg><svg class="a" style="left:91px;top:4px" width="16" height="16" viewBox="0 0 16 16" ><path d="M2.5 1.500h8l3 3v10.500h-11z" fill="#fff" stroke="#889"/><path d="M5 7a3.5 3.5 0 0 1 6-1l1-1v3.500h-3.500l1.200-1.200a2 2 0 0 0-3.200.7zM11.5 10a3.5 3.5 0 0 1-6 1l-1 1v-3.500h3.500l-1.200 1.200a2 2 0 0 0 3.200-.7z" fill="#20a830"/></svg><div class="sep" style="left:112px;top:4px"></div><svg class="a" style="left:119px;top:3px" width="17" height="18" viewBox="0 0 17 18" ><g transform="scale(0.68)"><path d="M6 2l9-2v14l-9-1z" fill="#3c3c44"/><path d="M7.5 3.500l6-1.300v10l-6-.6z" fill="#8890a0"/><path d="M0 17l6-4.5 9 1-4 5z" fill="#70747c"/><path d="M0 17l11 2v1l-11-2z" fill="#44464c"/><rect x="10" y="10" width="6.5" height="15" fill="#e43818"/><rect x="10" y="10" width="2" height="15" fill="#f06848"/><path d="M10 10l2-2h6.500l-2 2z" fill="#b82808"/><rect x="16.5" y="8" width="7.5" height="16.5" fill="#6c6c70" stroke="#2c2c30" stroke-width=".8"/><path d="M18 11h5M18 14h5M18 17h5M18 20h5" stroke="#222" stroke-width="1.5"/><path d="M18 12.300h5M18 15.300h5M18 18.300h5" stroke="#b8b8c0" stroke-width=".8"/></g></svg><svg class="a" style="left:137px;top:11px" width="5" height="3" viewBox="0 0 5 3"><path d="M0 0h5l-2.5 3z" fill="#000"/></svg></div>
<div class="dotv" style="left:9px;top:187px;height:118px"></div><div class="dotv" style="left:28px;top:245px;height:46px"></div><div class="dotv" style="left:47px;top:263px;height:10px"></div><div class="doth" style="left:10px;top:182px;width:10px"></div><div class="pm plus" style="left:5px;top:178px"></div><svg class="a" style="left:20px;top:174px" width="16" height="16" viewBox="0 0 16 16" ><rect x=".6" y="4.600" width="14.800" height="9.800" rx="1.5" fill="#f0c030" stroke="#6c4c10" stroke-width="1.100"/><rect x="2" y="9" width="12" height="4" fill="#f8dc60"/><path d="M3 1h8l1 2v5h-9z" fill="#2c2c30"/><path d="M4 3h7M4 5h7" stroke="#c8c8c8"/><rect x="6.5" y="7" width="2" height="6" fill="#6c4c10"/><path d="M6.5 14.500l6.5-9" stroke="#1048b8" stroke-width="2.600"/><path d="M11.5 2.500l1 2.5 2.5.5" fill="none" stroke="#1048b8" stroke-width="2"/></svg><div class="trow" style="left:41px;top:173px">Parameter</div><div class="doth" style="left:10px;top:200px;width:10px"></div><svg class="a" style="left:20px;top:192px" width="16" height="16" viewBox="0 0 16 16" ><circle cx="7" cy="7" r="6.5" fill="#1c78dc"/><path d="M2 4c1-2.5 5-3.5 7-2 1 2-2 2-3 3.500s-1 3-2.5 2.500c-1.5-1-2-2.5-1.5-4z" fill="#38b838"/><rect x="5.5" y="5.5" width="7.5" height="10" fill="#f8f8f8" stroke="#3a5a9a" stroke-width=".9"/><path d="M7 8h2M7 10h2M7 12h4" stroke="#c03030" stroke-width="1"/><path d="M10 13.500h2.5" stroke="#3050c0" stroke-width="1.200"/><path d="M9.5 10l5.5-5.5" stroke="#289028" stroke-width="2.400"/><path d="M9 11l1.5-.3-1.200-1.200z" fill="#222"/></svg><div class="trow" style="left:41px;top:191px">Global Device Comment</div><div class="doth" style="left:10px;top:218px;width:10px"></div><div class="pm plus" style="left:5px;top:214px"></div><svg class="a" style="left:20px;top:210px" width="16" height="16" viewBox="0 0 16 16" ><rect x=".6" y="7.600" width="14.800" height="7.800" rx="1.5" fill="#f0c030" stroke="#6c4c10" stroke-width="1.100"/><path d="M5 1h10v7.500h-10z" fill="#70d8f0" stroke="#445" stroke-width="1"/><path d="M3 9h12.500v3h-12.500z" fill="#2a2420"/><path d="M4 13h10" stroke="#f8dc60" stroke-width="1.5"/><path d="M1.5 4.500l5 5.5" stroke="#208820" stroke-width="2.600"/></svg><div class="trow" style="left:41px;top:209px">Program Setting</div><div class="doth" style="left:10px;top:236px;width:10px"></div><div class="pm" style="left:5px;top:232px"></div><svg class="a" style="left:20px;top:228px" width="16" height="16" viewBox="0 0 16 16" ><path d="M1 5h14v10h-14z" fill="#f4dc68" stroke="#c8a830" stroke-width=".8"/><path d="M1.5 9h13v5.500h-13z" fill="#f8e888"/><circle cx="5" cy="5" r="2.800" fill="#f098b0"/><circle cx="10" cy="4.5" r="2.600" fill="#88d058"/><circle cx="13" cy="3" r="1.300" fill="#f0e040"/><circle cx="6" cy="10" r="2.200" fill="#c8e0a0"/></svg><div class="trow" style="left:41px;top:227px">POU</div><div class="doth" style="left:29px;top:254px;width:10px"></div><div class="pm" style="left:24px;top:250px"></div><svg class="a" style="left:39px;top:246px" width="16" height="16" viewBox="0 0 16 16" ><path d="M3.5 1.500h5l2 2v6h-7z" fill="#e8e8f0" stroke="#667" stroke-width=".8"/><path d="M5.5 .5h5l2 2v7h-7z" fill="#fff" stroke="#667" stroke-width=".8"/><path d="M7 1v7M9 2v6" stroke="#99a"/><path d="M.6 7.600h5l1 1.400h8.800v6.400h-14.800z" fill="#ecd070" stroke="#8c7020" stroke-width="1"/><path d="M1.5 10.500h13" stroke="#f8eaa8" stroke-width="1.5"/></svg><div class="trow" style="left:60px;top:245px">Program</div><div class="doth" style="left:48px;top:272px;width:10px"></div><svg class="a" style="left:58px;top:264px" width="16" height="16" viewBox="0 0 16 16" ><path d="M2.5 1.500h8l3 3v10h-11z" fill="#fff" stroke="#667" stroke-width=".9"/><path d="M10.5 1.500v3h3" fill="#dde" stroke="#667" stroke-width=".7"/><path d="M3.5 8.500h3M9.5 8.500h3" stroke="#d81010" stroke-width="1.200"/><path d="M6.300 5.500v6M9.800 5.500v6" stroke="#d81010" stroke-width="1.5"/><path d="M7.200 7l1.800 1.5-1.800 1.500z" fill="#d81010"/><path d="M3 14h10" stroke="#889" stroke-width="1.600"/></svg><div class="a" style="left:76px;top:264px;width:36px;height:17px;background:#ececec"></div><div class="trow" style="left:79px;top:263px">MAIN</div><div class="doth" style="left:29px;top:290px;width:10px"></div><svg class="a" style="left:39px;top:282px" width="16" height="16" viewBox="0 0 16 16" ><path d="M3.5 1.500h5l2 2v6h-7z" fill="#e8e8f0" stroke="#667" stroke-width=".8"/><path d="M5.5 .5h5l2 2v7h-7z" fill="#fff" stroke="#667" stroke-width=".8"/><path d="M7 1v7M9 2v6" stroke="#99a"/><path d="M.6 7.600h5l1 1.400h8.800v6.400h-14.800z" fill="#ecd070" stroke="#8c7020" stroke-width="1"/><path d="M1.5 10.500h13" stroke="#f8eaa8" stroke-width="1.5"/></svg><div class="trow" style="left:60px;top:281px;width:119px;overflow:hidden">Local Device Commen</div><div class="doth" style="left:10px;top:308px;width:10px"></div><div class="pm plus" style="left:5px;top:304px"></div><svg class="a" style="left:20px;top:300px" width="16" height="16" viewBox="0 0 16 16" ><rect x=".6" y="5.600" width="14.800" height="9.800" rx="1.5" fill="#d8b450" stroke="#6c4c10" stroke-width="1.100"/><rect x="2.5" y="2" width="11" height="10" fill="#282828"/><path d="M4 1v2M12 1v2" stroke="#282828" stroke-width="1.5"/><rect x="4" y="4" width="8" height="5" fill="#e83820"/><circle cx="7" cy="11" r="3.200" fill="#2c88d8"/><path d="M5 10c1-1.5 3-1 3 .5s-2 2-3 1z" fill="#38b838"/><rect x="8.5" y="11" width="5" height="3.5" fill="#d0d0dc" stroke="#667" stroke-width=".6"/></svg><div class="trow" style="left:41px;top:299px">Device Memory</div>
<div id="hscroll" class="a"><svg class="a" style="left:6px;top:4px" width="4" height="7" viewBox="0 0 4 7"><path d="M4 0v7l-4-3.500z" fill="#333"/></svg><div id="hthumb" class="a"><svg class="a" style="left:64px;top:3px" width="7" height="7" viewBox="0 0 7 7"><path d="M.5 0v7M3.5 0v7M6.5 0v7" stroke="#555"/></svg></div><svg class="a" style="left:168px;top:4px" width="4" height="7" viewBox="0 0 4 7"><path d="M0 0v7l4-3.500z" fill="#333"/></svg></div>
<div id="navsplit" class="a"><div class="a" style="left:73px;top:1px;width:34px;height:3px;background:repeating-linear-gradient(115deg,#fff 0,#fff 1.500px,transparent 1.500px,transparent 3.700px)"></div></div>
<div class="nbtn on" style="top:611px"><svg class="a" style="left:6px;top:3px" width="24" height="26" viewBox="0 0 24 26" ><path d="M6 2l9-2v14l-9-1z" fill="#3c3c44"/><path d="M7.5 3.500l6-1.300v10l-6-.6z" fill="#8890a0"/><path d="M0 17l6-4.5 9 1-4 5z" fill="#70747c"/><path d="M0 17l11 2v1l-11-2z" fill="#44464c"/><rect x="10" y="10" width="6.5" height="15" fill="#e43818"/><rect x="10" y="10" width="2" height="15" fill="#f06848"/><path d="M10 10l2-2h6.500l-2 2z" fill="#b82808"/><rect x="16.5" y="8" width="7.5" height="16.5" fill="#6c6c70" stroke="#2c2c30" stroke-width=".8"/><path d="M18 11h5M18 14h5M18 17h5M18 20h5" stroke="#222" stroke-width="1.5"/><path d="M18 12.300h5M18 15.300h5M18 18.300h5" stroke="#b8b8c0" stroke-width=".8"/></svg><div class="t">Project</div></div>
<div class="nbtn" style="top:643px"><svg class="a" style="left:4px;top:3px" width="26" height="26" viewBox="0 0 26 26" ><path d="M1 3c4-1.5 8-1 11 1 3-2 7-2.5 11-1v14c-4-1-8-1-11 1-3-2-7-2-11-1z" fill="#f8f0dc" stroke="#a89878" stroke-width=".8"/><path d="M3 5c3-.8 6-.4 8 1M3 8c3-.8 6-.4 8 1M3 11c3-.8 6-.4 8 1M14 6c2-1.400 5-1.800 8-1M14 9c2-1.400 5-1.800 8-1" stroke="#d8ccb0" fill="none"/><path d="M12 4v15" stroke="#a89878"/><path d="M1 17v2.500c4-1 8-1 11 1 3-2 7-2 11-1v-2.500c-4-1-8-1-11 1-3-2-7-2-11-1z" fill="#4c3420"/><path d="M10 19.500v3l2-1.5 2 1.500v-3z" fill="#4c3420"/><path d="M15.5 13l3-3.5 3.5 1.5 2 4v9l-6 1.5-2-5z" fill="#f0c030"/><path d="M17 12l2-2 2 1-1 4z" fill="#f8e080"/><path d="M18 25l6-1.500v-5z" fill="#a8c840"/></svg><div class="t">User Library</div></div>
<div class="nbtn" style="top:675px"><svg class="a" style="left:4px;top:3px" width="26" height="26" viewBox="0 0 26 26" ><path d="M3 2l13-2v12l-13 1z" fill="#1c3c5c"/><path d="M4.5 3.300l10-1.500v9l-10 .8z" fill="#28b8f4"/><path d="M4.5 3.300l10-1.500v3l-10 4z" fill="#60d0f8"/><path d="M1 5l2-1v11l-2-.5z" fill="#30a050"/><path d="M6 13l6-.5v2l-6 .5z" fill="#1c3c5c"/><path d="M1 17.500h14M2 20h12" stroke="#28b040" stroke-width="1.800"/><rect x="14.5" y="6" width="9" height="19" rx="1" fill="#4c4c50" stroke="#1c1c20" stroke-width=".8"/><path d="M16 9h6M16 11.500h6M16 14h6" stroke="#88888c" stroke-width="1.200"/><path d="M16 18h6M16 20.500h6M16 23h6" stroke="#18181c" stroke-width="1.5"/></svg><div class="t">Connection Destination</div></div>
<div class="nbtn" style="top:707px;height:33px"><svg class="a" style="left:164px;top:9px" width="8" height="14" viewBox="0 0 8 14"><path d="M0.5 0.500l2.5 2.5-2.5 2.500M4.5 0.500l2.5 2.5-2.5 2.5" stroke="#000" fill="none" stroke-width="1.200"/><path d="M1 10h6l-3 3z" fill="#000"/></svg></div>
<div class="a" style="left:179px;top:122px;width:1px;height:618px;background:#8c8ca8"></div>
<div id="split" class="a"></div>
<div id="tabstrip" class="a"></div>
<svg class="a" style="left:184px;top:99px" width="146" height="26" viewBox="0 0 146 26"><defs><linearGradient id="tg" x1="0" y1="0" x2="0" y2="1"><stop offset="0" stop-color="#fffaf2"/><stop offset=".35" stop-color="#fde4c0"/><stop offset=".8" stop-color="#fbc47c"/><stop offset="1" stop-color="#f9b868"/></linearGradient></defs><path d="M1.5 24.500v-2.500l23-20.500h115a3 3 0 0 1 3 3v20z" fill="url(#tg)" stroke="#44609c" stroke-width="1"/><path d="M2 25h141" stroke="#f9b868" stroke-width="2"/></svg>
<svg class="a" style="left:213px;top:103px" width="16" height="16" viewBox="0 0 16 16" ><path d="M2.5 1.500h8l3 3v10h-11z" fill="#fff" stroke="#667" stroke-width=".9"/><path d="M10.5 1.500v3h3" fill="#dde" stroke="#667" stroke-width=".7"/><path d="M3.5 8.500h3M9.5 8.500h3" stroke="#d81010" stroke-width="1.200"/><path d="M6.300 5.500v6M9.800 5.500v6" stroke="#d81010" stroke-width="1.5"/><path d="M7.200 7l1.800 1.5-1.800 1.500z" fill="#d81010"/><path d="M3 14h10" stroke="#889" stroke-width="1.600"/></svg>
<div class="a" style="left:233px;top:104px;font-weight:bold;font-size:12px;line-height:15px;white-space:nowrap;letter-spacing:-0.1px">[PRG] MAIN</div>
<div class="a" style="left:307px;top:103px;width:16px;height:16px;border:1px solid #f4ecd8;background:#fbf6ea;box-shadow:0 0 0 1px #e8c890"></div><svg class="a" style="left:311px;top:107px" width="8" height="8" viewBox="0 0 8 8"><path d="M.5 .5l7 7M7.5 .5l-7 7" stroke="#8a8676" stroke-width="1.800"/></svg>
<svg class="a" style="left:1233px;top:105px" width="44" height="10" viewBox="0 0 44 10"><path d="M6.5 1v7l-4.5-3.500z" fill="none" stroke="#000" stroke-width="1"/><path d="M18.5 1v7l4.5-3.500z" fill="none" stroke="#000" stroke-width="1"/><path d="M33 3h8l-4 4z" fill="#000"/></svg>
<div id="frame" class="a"><div class="a" style="left:0px;top:0px;width:1096px;height:1px;background:#6a625a"></div><div class="a" style="left:1px;top:1px;width:1095px;height:2px;background:#aca49c"></div><div class="a" style="left:3px;top:3px;width:1092px;height:1px;background:#6e665e"></div><div class="a" style="left:0px;top:0px;width:1px;height:618px;background:#625e5a"></div><div class="a" style="left:1px;top:1px;width:2px;height:616px;background:#c2beba"></div><div class="a" style="left:3px;top:3px;width:1px;height:613px;background:#706c64"></div><div class="a" style="left:4px;top:614px;width:1091px;height:3px;background:#f3f2f0"></div><div class="a" style="left:0px;top:617px;width:1096px;height:1px;background:#625a52"></div><div class="a" style="left:1093px;top:4px;width:2px;height:613px;background:#f3f2f0"></div><div class="a" style="left:1095px;top:0px;width:1px;height:618px;background:#544c44"></div></div>
<div class="a" style="left:187px;top:122px;width:140px;height:3px;background:#f9b868"></div><div class="a" style="left:184px;top:122px;width:1px;height:3px;background:#7a6a5a"></div><div class="a" style="left:185px;top:122px;width:2px;height:3px;background:#ecc088"></div><div class="a" style="left:327px;top:122px;width:1px;height:3px;background:#6a6a8a"></div>
<div class="a" style="left:270px;top:126px;width:1px;height:68px;background:#000"></div><div class="a" style="left:271px;top:194px;width:1px;height:67px;background:#000"></div><div class="a" style="left:270px;top:261px;width:1px;height:475px;background:#000"></div><div class="a" style="left:1251px;top:126px;width:1px;height:610px;background:#000"></div><div class="a" style="left:271px;top:159px;width:2px;height:1px;background:#000"></div><div class="a" style="left:273px;top:149px;width:1px;height:20px;background:#000"></div><div class="a" style="left:273px;top:149px;width:5px;height:1px;background:#000"></div><div class="a" style="left:273px;top:168px;width:5px;height:1px;background:#000"></div><div class="lt" style="left:281px;top:150px;font-size:12px">&lt;</div><div class="lt" style="left:351px;top:150px">D100</div><div class="lt" style="left:433px;top:150px">K2</div><div class="a" style="left:508px;top:149px;width:1px;height:20px;background:#000"></div><div class="a" style="left:504px;top:149px;width:5px;height:1px;background:#000"></div><div class="a" style="left:504px;top:168px;width:5px;height:1px;background:#000"></div><div class="a" style="left:509px;top:159px;width:5px;height:1px;background:#000"></div><div class="a" style="left:514px;top:149px;width:1px;height:20px;background:#000"></div><div class="a" style="left:514px;top:149px;width:5px;height:1px;background:#000"></div><div class="a" style="left:514px;top:168px;width:5px;height:1px;background:#000"></div><div class="lt" style="left:522px;top:150px;font-size:12px">&gt;</div><div class="lt" style="left:592px;top:150px">D100</div><div class="lt" style="left:675px;top:150px">K0</div><div class="a" style="left:749px;top:149px;width:1px;height:20px;background:#000"></div><div class="a" style="left:745px;top:149px;width:5px;height:1px;background:#000"></div><div class="a" style="left:745px;top:168px;width:5px;height:1px;background:#000"></div><div class="a" style="left:271px;top:227px;width:2px;height:1px;background:#000"></div><div class="a" style="left:273px;top:217px;width:1px;height:20px;background:#000"></div><div class="a" style="left:273px;top:217px;width:5px;height:1px;background:#000"></div><div class="a" style="left:273px;top:236px;width:5px;height:1px;background:#000"></div><div class="lt" style="left:281px;top:218px;font-size:12px">&gt;</div><div class="lt" style="left:351px;top:218px">D100</div><div class="lt" style="left:433px;top:218px">K0</div><div class="a" style="left:508px;top:217px;width:1px;height:20px;background:#000"></div><div class="a" style="left:504px;top:217px;width:5px;height:1px;background:#000"></div><div class="a" style="left:504px;top:236px;width:5px;height:1px;background:#000"></div><div class="a" style="left:509px;top:227px;width:5px;height:1px;background:#000"></div><div class="a" style="left:514px;top:217px;width:1px;height:20px;background:#000"></div><div class="a" style="left:514px;top:217px;width:5px;height:1px;background:#000"></div><div class="a" style="left:514px;top:236px;width:5px;height:1px;background:#000"></div><div class="lt" style="left:522px;top:218px;font-size:12px">&lt;</div><div class="lt" style="left:592px;top:218px">D100</div><div class="lt" style="left:675px;top:218px">K2</div><div class="a" style="left:749px;top:217px;width:1px;height:20px;background:#000"></div><div class="a" style="left:745px;top:217px;width:5px;height:1px;background:#000"></div><div class="a" style="left:745px;top:236px;width:5px;height:1px;background:#000"></div><div class="a" style="left:750px;top:159px;width:408px;height:1px;background:#000"></div><div class="a" style="left:750px;top:227px;width:3px;height:1px;background:#000"></div><div class="a" style="left:752px;top:159px;width:1px;height:69px;background:#000"></div><svg class="a" style="left:1156px;top:148px" width="96" height="22" viewBox="0 0 96 22"><path d="M6.5 1.500c-5.5 5.5-5.5 12.5 0 18M87.5 1.500c5.5 5.5 5.5 12.5 0 18" fill="none" stroke="#000" stroke-width="1.100"/><path d="M91 11.500h4" stroke="#000"/></svg><div class="lt" style="left:1165px;top:150px">Y000</div><div class="lt" style="right:1015px;top:150px">0</div><div class="lt" style="right:1015px;top:285px">22</div><div class="a" style="left:271px;top:294px;width:886px;height:1px;background:#000"></div><div class="a" style="left:1157px;top:285px;width:1px;height:20px;background:#000"></div><div class="a" style="left:1157px;top:285px;width:5px;height:1px;background:#000"></div><div class="a" style="left:1157px;top:304px;width:5px;height:1px;background:#000"></div><div class="lt" style="left:1165px;top:285px">END</div><div class="a" style="left:1248px;top:285px;width:1px;height:20px;background:#000"></div><div class="a" style="left:1244px;top:285px;width:5px;height:1px;background:#000"></div><div class="a" style="left:1244px;top:304px;width:5px;height:1px;background:#000"></div><div class="a" style="left:1249px;top:294px;width:2px;height:1px;background:#000"></div><div class="a" style="left:271px;top:194px;width:240px;height:67px;border:2px solid #08006c;border-left:none"></div>
<div id="vscroll" class="a"><svg class="a" style="left:6px;top:7px" width="7" height="4" viewBox="0 0 7 4"><path d="M0 4h7l-3.5-4z" fill="#555"/></svg><div id="vthumb" class="a"></div><svg class="a" style="left:6px;top:600px" width="7" height="4" viewBox="0 0 7 4"><path d="M0 0h7l-3.5 4z" fill="#555"/></svg></div>
<div id="status" class="a"><div class="s" style="left:296px">English</div><div class="d" style="left:398px"></div><div class="s" style="left:404px">Unlabeled</div><div class="d" style="left:487px"></div><div class="s" style="left:828px">Host Station</div><div class="d" style="left:981px"></div><div class="s" style="left:985px">10/23Step</div><div class="d" style="left:1149px"></div><div class="s" style="left:1154px">Ovrwrte</div><div class="d" style="left:1207px"></div><div class="s" style="left:1212px;color:#b4b4b4;font-size:12px">大写</div><div class="d" style="left:1243px"></div><div class="s" style="left:1248px;color:#b4b4b4;font-size:12px">数字</div></div><div class="a" style="left:721px;top:734px;width:101px;height:1px;background:#2c2c2c"></div><div class="a" style="left:721px;top:735px;width:101px;height:1px;background:#f4f4f4"></div><div class="a" style="left:721px;top:736px;width:101px;height:25px;background:linear-gradient(180deg,#8e8e8e 0,#646464 4px,#484848 9px,#383838 16px,#2a2a2a 25px)"><div class="a" style="left:4px;top:3px;width:8px;height:17px;background:radial-gradient(circle at 1px 1px,#1c1c1c 0,#1c1c1c 0.8px,rgba(255,255,255,.25) 1.300px,transparent 1.600px);background-size:3px 4px"></div><div class="a" style="left:20px;top:5px;color:#fff;font-family:'Liberation Mono',monospace;font-size:13px;line-height:14px;letter-spacing:-1px">CH</div><svg class="a" style="left:42px;top:8px" width="15" height="10" viewBox="0 0 15 10"><rect x=".5" y="1.5" width="14" height="8" rx="1" fill="#b8b8b8" stroke="#e8e8e8" stroke-width=".8"/><path d="M2 4h11M2 6h11" stroke="#555" stroke-dasharray="1.5 1"/><path d="M4 8h7" stroke="#555"/></svg><svg class="a" style="left:63px;top:3px" width="16" height="16" viewBox="0 0 16 16"><circle cx="8" cy="8" r="7.300" fill="#1420a8" stroke="#a8b4e8" stroke-width=".9"/><text x="8" y="12" text-anchor="middle" font-family="Liberation Sans,sans-serif" font-weight="bold" font-size="11" fill="#fff">?</text></svg><svg class="a" style="left:89px;top:6px" width="7" height="13" viewBox="0 0 7 13"><path d="M1 1h5" stroke="#fff" stroke-width="2"/><path d="M0.5 9h6l-3 3.500z" fill="#fff"/></svg></div><div id="taskbar" class="a"><div class="tkb" style="left:122px;width:54px"></div><div class="tkb" style="left:176px;width:5px"></div><div class="tkb" style="left:184px;width:59px"></div><div class="tkb" style="left:308px;width:54px"></div><div class="tkb" style="left:362px;width:4px"></div><div class="tkb" style="left:370px;width:58px"></div><div class="tkb" style="left:432px;width:58px"></div><div class="tkb" style="left:494px;width:58px"></div><div class="tkb" style="left:1266px;width:14px"></div><div class="a" style="left:13px;top:2px;width:28px;height:12px;border-radius:14px 14px 0 0;background:radial-gradient(ellipse at 50% 100%,#c8d4e0 0,#98a8b8 60%,#5a6a7a 100%)"></div><div class="a" style="left:84px;top:2px;width:22px;height:14px;border-radius:11px 11px 0 0;border:2px solid #f0c020;border-bottom:none;transform:rotate(-18deg)"></div><div class="a" style="left:134px;top:4px;width:16px;height:4px;background:#c8b888;opacity:.7"></div><div class="a" style="left:390px;top:3px;width:20px;height:10px;border-radius:10px 10px 0 0;background:#88c4f4"></div><div class="a" style="left:444px;top:4px;width:34px;height:4px;background:#1818d0"></div><div class="a" style="left:508px;top:3px;width:30px;height:5px;background:#f02020"></div><div class="a" style="left:1213px;top:6px;color:#fff;font-size:12px;line-height:12px;font-weight:bold">14:45</div></div>
</body>
</html>
